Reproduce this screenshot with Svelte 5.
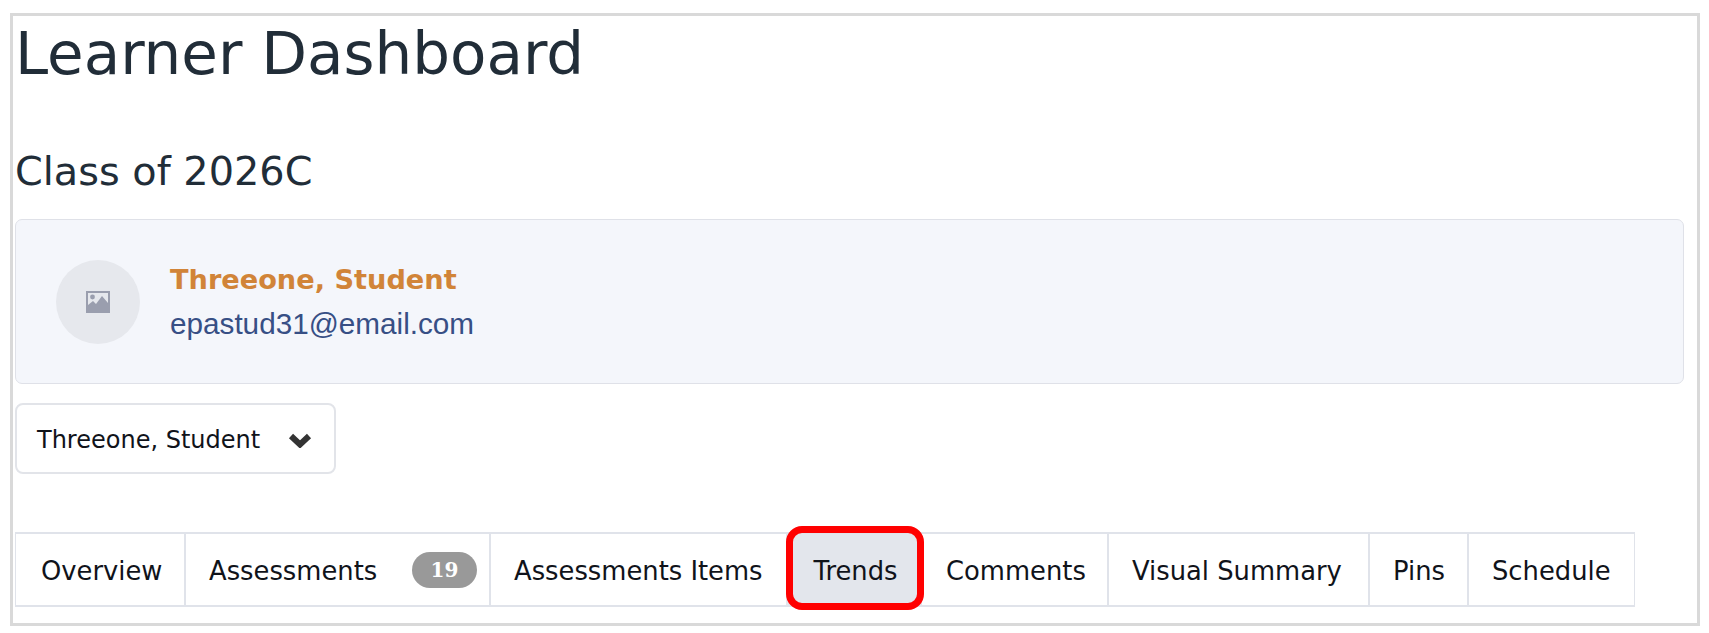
<script>
  const tabs = [
    { label: 'Overview', width: 168 },
    { label: 'Assessments', width: 305, badge: '19' },
    { label: 'Assessments Items', width: 297 },
    { label: 'Trends', width: 136, active: true },
    { label: 'Comments', width: 185 },
    { label: 'Visual Summary', width: 261 },
    { label: 'Pins', width: 99 },
    { label: 'Schedule', width: 167 }
  ];
</script>

<div class="frame">
  <h1>Learner Dashboard</h1>
  <h2>Class of 2026C</h2>
  <section class="card">
    <div class="avatar">
      <svg width="24" height="22" viewBox="0 0 24 22" aria-hidden="true">
        <path fill="#9a9eae" fill-rule="evenodd" d="M0 0h24v22H0zM2 2v12l5-4 3 3 6-8 6 7V2z" />
        <circle cx="6.5" cy="6" r="2.4" fill="#9a9eae" />
      </svg>
    </div>
    <div class="who">
      <div class="name">Threeone, Student</div>
      <div class="email">epastud31@email.com</div>
    </div>
  </section>
  <button class="select">
    <span>Threeone, Student</span>
    <svg width="24" height="16" viewBox="0 0 24 16" aria-hidden="true">
      <path d="M3 4 12 12.500 21 4" fill="none" stroke="#333" stroke-width="6" />
    </svg>
  </button>
  <nav class="tabs">
    {#each tabs as tab}
      <div class="tab" class:active={tab.active} style="width: {tab.width}px">
        <span class="label">{tab.label}</span>
        {#if tab.badge}<b class="badge">{tab.badge}</b>{/if}
        {#if tab.active}<i class="mark"></i>{/if}
      </div>
    {/each}
  </nav>
</div>

<style>
  :global(body) { margin: 0; background: #fff; }
  .frame {
    box-sizing: border-box;
    width: 1690px;
    height: 613px;
    margin: 13px 0 0 10px;
    padding: 0 13px 0 2px;
    border: 3px solid #d9d9d9;
    font-family: "DejaVu Sans", Verdana, sans-serif;
    overflow: hidden;
  }
  h1 {
    margin: 2px 0 0 0;
    font-size: 59.5px;
    line-height: 72px;
    font-weight: 400;
    color: #212d38;
  }
  h2 {
    margin: 57px 0 0 0;
    font-size: 39.8px;
    line-height: 48px;
    font-weight: 400;
    color: #212d38;
  }
  .card {
    box-sizing: border-box;
    height: 165px;
    margin-top: 24px;
    padding: 0 40px;
    display: flex;
    align-items: center;
    gap: 30px;
    background: #f4f6fb;
    border: 1px solid #dfe1e8;
    border-radius: 7px;
  }
  .avatar {
    width: 84px;
    height: 84px;
    border-radius: 50%;
    background: #e6e8ed;
    display: flex;
    align-items: center;
    justify-content: center;
  }
  .name {
    font-size: 27.2px;
    line-height: 36px;
    font-weight: 700;
    color: #d18438;
  }
  .email {
    margin-top: 8px;
    font-family: "Liberation Sans", Arial, sans-serif;
    font-size: 29.700px;
    line-height: 36px;
    color: #374f85;
  }
  .select {
    box-sizing: border-box;
    width: 321px;
    height: 71px;
    margin-top: 19px;
    padding: 2px 22px 0 20px;
    display: flex;
    align-items: center;
    justify-content: space-between;
    background: #fff;
    border: 2px solid #e2e4e9;
    border-radius: 8px;
    font: 400 24px "DejaVu Sans", Verdana, sans-serif;
    color: #10131a;
  }
  .tabs {
    display: flex;
    width: fit-content;
    height: 71px;
    margin-top: 58px;
    border: 1px solid #e0e3ea;
    border-width: 2px 1px 2px 1px;
  }
  .tab {
    position: relative;
    box-sizing: border-box;
    display: flex;
    align-items: center;
    justify-content: space-between;
    padding: 0 12px 0 23px;
    border-left: 2px solid #e0e3ea;
    font-size: 25.800px;
    color: #10131a;
    white-space: nowrap;
  }
  .label { padding-top: 2px; }
  .tab:first-child { border-left: 0; padding-left: 25px; }
  .tab.active { background: #e3e6ec; border-left: 0; justify-content: center; padding: 0 0 0 3px; }
  .tab.active + .tab { border-left: 0; padding-left: 24px; }
  .badge {
    width: 65px;
    height: 36px;
    margin-top: 1px;
    border-radius: 18px;
    background: #999;
    color: #fff;
    font: 700 20px/36px "DejaVu Serif", "Liberation Serif", serif;
    text-align: center;
  }
  .mark {
    position: absolute;
    inset: -8px -2px -5px 0;
    border: 7px solid #f00;
    border-radius: 16px;
  }
</style>
